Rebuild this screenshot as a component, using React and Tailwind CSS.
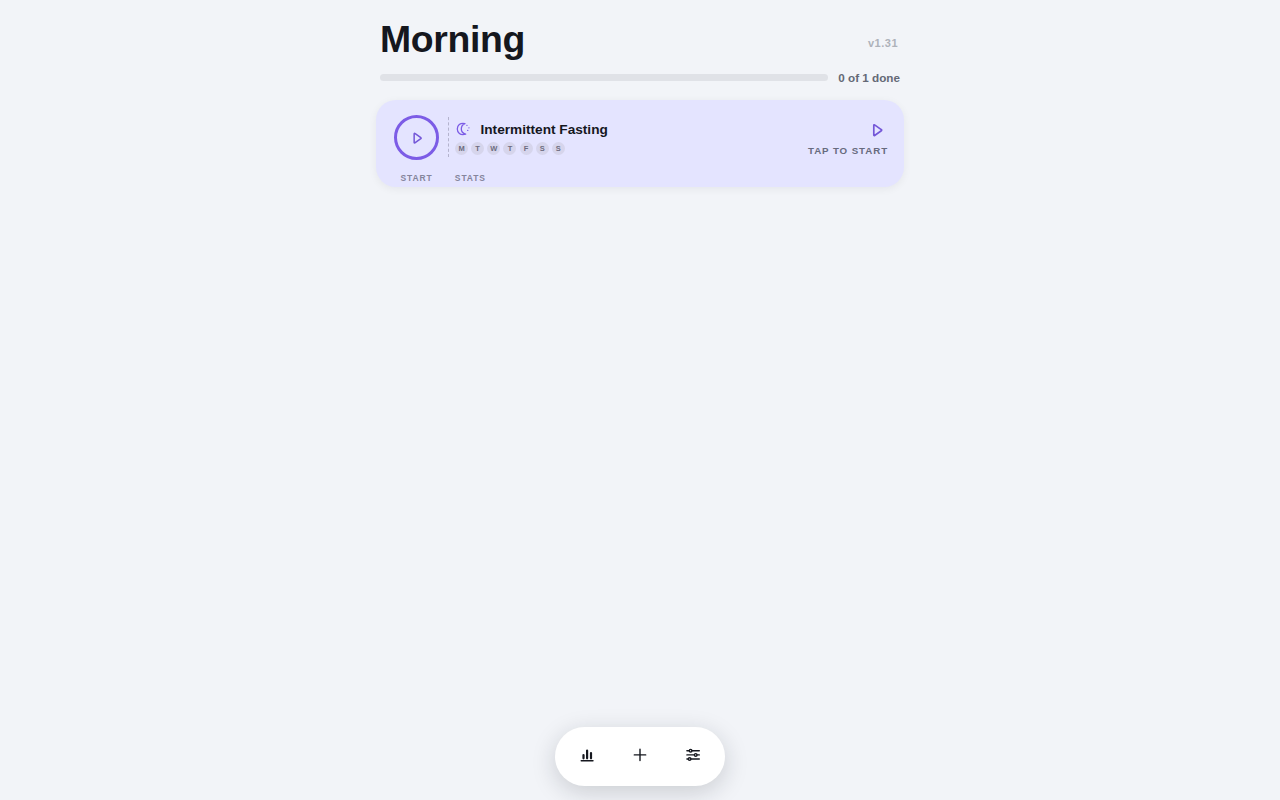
const DAYS = ['M', 'T', 'W', 'T', 'F', 'S', 'S'];

function PlayIcon({ className, strokeWidth = 1.7 }) {
    return (
        <svg viewBox="0 0 18 18" className={className} fill="none" stroke="currentColor" strokeWidth={strokeWidth} strokeLinejoin="round">
            <path d="M5.800 4.300v9.800a.5.5 0 0 0 .8.400l6.700-4.700a.7.7 0 0 0 0-1.200L6.600 3.900a.5.5 0 0 0-.8.400Z" />
        </svg>
    );
}

function MoonIcon({ className }) {
    return (
        <svg viewBox="0 0 16 16" className={className} fill="none" stroke="currentColor" strokeWidth="1.300" strokeLinecap="round" strokeLinejoin="round">
            <path d="M10 2.600C5 1.500 2.300 4.500 2.300 8s2.700 6.800 8.400 5.200C7.900 12.400 6.300 10.500 6.300 8s1.300-4.500 3.700-5.400Z" />
            <path d="M11.900 4.300h.1M13.900 6.800h.1M12.700 9.400h.1" />
        </svg>
    );
}

function ChartIcon() {
    return (
        <svg viewBox="0 0 16 16" className="size-4" fill="none" stroke="currentColor" strokeLinecap="round">
            <path strokeWidth="2.200" d="M4.500 8.100v3.200M8.100 3.600v7.700M12 6v5.300" />
            <path strokeWidth="1.400" d="M2.200 13.700h11.800" />
        </svg>
    );
}

function SlidersIcon() {
    return (
        <svg viewBox="0 0 16 16" className="size-4" fill="none" stroke="currentColor" strokeWidth="1.400" strokeLinecap="round">
            <path d="M1.900 3.700h2.300M7 3.700h7.300M1.900 7.900h7.300M12.200 7.900h2.100M1.900 12h1.300M6 12h8.300" />
            <circle cx="5.600" cy="3.700" r="1.300" />
            <circle cx="10.700" cy="7.900" r="1.300" />
            <circle cx="4.600" cy="12" r="1.300" />
        </svg>
    );
}

function Header() {
    return (
        <header className="px-1">
            <div className="flex h-10 items-start justify-between">
                <h1 className="text-[37.4px] leading-[39px] font-bold tracking-[-0.37px] text-[#15171e]">Morning</h1>
                <span className="mt-[15px] mr-0.5 text-[11px] leading-4 font-bold tracking-[0.5px] text-[#aeb2ba]">v1.31</span>
            </div>
            <div className="mt-2.5 flex h-4 items-center gap-2.5">
                <div className="mb-px h-[7px] flex-1 rounded-full bg-[#e0e2e7]" />
                <span className="text-[11.7px] leading-4 font-bold whitespace-nowrap text-[#646976]">0 of 1 done</span>
            </div>
        </header>
    );
}

function HabitCard() {
    return (
        <section className="mt-3.5 flex h-[87px] rounded-[20px] bg-[#e4e4ff] pr-4 pl-[18px] shadow-[0_2px_8px_rgba(20,25,40,0.06)]">
            <div className="flex w-[45px] flex-col items-center pt-[15px]">
                <button className="flex size-[45px] shrink-0 items-center justify-center rounded-full border-[3px] border-[#7c5ce6] text-[#7457d8]">
                    <PlayIcon className="size-4" />
                </button>
                <span className="mt-3 text-[8.5px] leading-3 font-bold tracking-[0.9px] text-[#85859c]">START</span>
            </div>

            {/* Dashed divider */}
            <svg className="mt-[17px] ml-[9px] h-10 w-px shrink-0 text-[#b4b3ce]" viewBox="0 0 1 40">
                <path d="M.5 0v40" stroke="currentColor" strokeDasharray="3.170 2.120" />
            </svg>

            <div className="ml-1.5 flex-1">
                <div className="mt-5 flex h-[18px] items-center gap-2.5">
                    <MoonIcon className="size-4 text-[#7c5ce6]" />
                    <h2 className="-ml-[0.5px] pt-px text-[13.65px] leading-[18px] font-bold text-[#15171e]">Intermittent Fasting</h2>
                </div>
                <div className="mt-1 flex gap-[3.150px]">
                    {DAYS.map((day, i) => (
                        <span key={i} className="flex size-[13px] items-center justify-center rounded-full bg-[#d6d5ec] text-[7.5px] font-bold text-[#6d6c80]">
                            {day}
                        </span>
                    ))}
                </div>
                <div className="mt-[17px] -ml-[0.2px] text-[8.5px] leading-3 font-bold tracking-[0.9px] text-[#85859c]">STATS</div>
            </div>

            <div className="flex flex-col items-end pt-[21px]">
                <PlayIcon className="mr-0.5 size-[18px] text-[#7457d8]" />
                <span className="mt-[6px] text-[9.75px] leading-3 font-bold tracking-[0.9px] text-[#676b7e]">TAP TO START</span>
            </div>
        </section>
    );
}

function BottomNav() {
    return (
        <nav className="mb-3.5 flex h-[59px] w-[170px] items-center justify-center gap-[37px] self-center rounded-full bg-white pb-[3px] text-[#15171e] shadow-[0_6px_24px_rgba(20,25,40,0.18)]">
            <button><ChartIcon /></button>
            <button>
                <svg viewBox="0 0 16 16" className="size-4" fill="none" stroke="currentColor" strokeWidth="1.400" strokeLinecap="round">
                    <path d="M8 2.200v11.400M2.300 7.900h11.400" />
                </svg>
            </button>
            <button><SlidersIcon /></button>
        </nav>
    );
}

export default function App() {
    return (
        <div className="flex h-screen flex-col overflow-hidden bg-[#f2f4f8] font-['Liberation_Sans',sans-serif]">
            <main className="mx-auto w-[528px] flex-1 pt-5">
                <Header />
                <HabitCard />
            </main>
            <BottomNav />
        </div>
    );
}
